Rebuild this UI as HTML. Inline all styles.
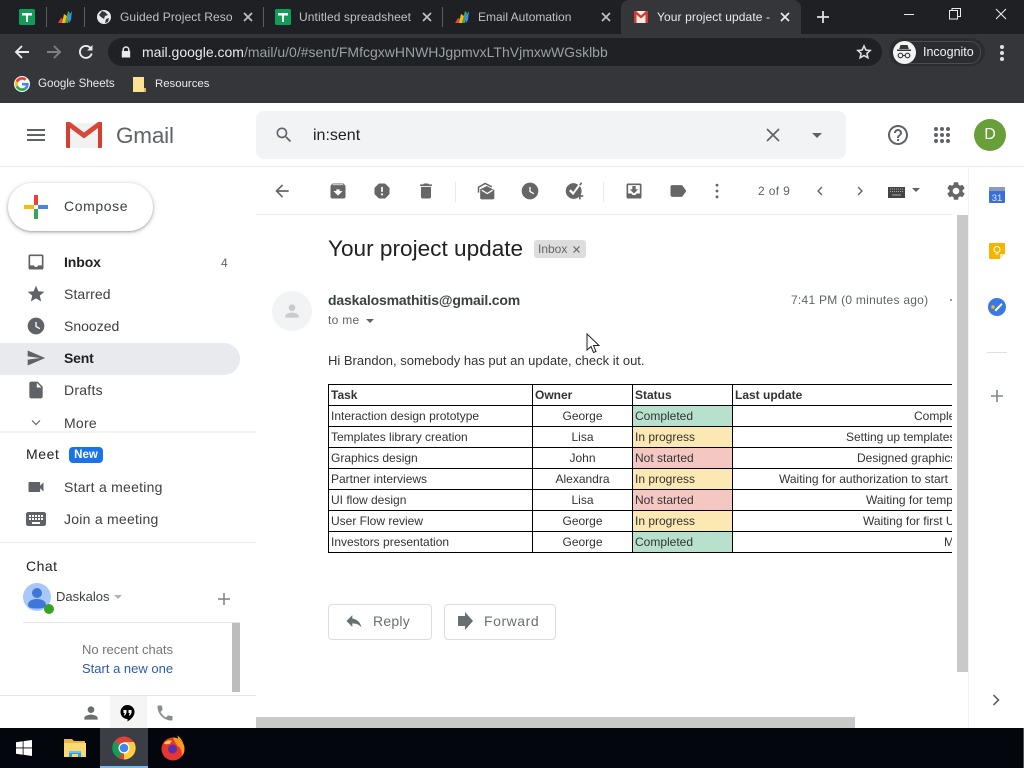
<!DOCTYPE html>
<html lang="en"><head><meta charset="utf-8"><title>Your project update</title>
<style>
html,body{margin:0;padding:0;width:1024px;height:768px;overflow:hidden;background:#fff;font-family:"Liberation Sans",sans-serif}
#r{position:relative;width:1024px;height:768px;overflow:hidden}
#r div,#r span.a,#r svg{position:absolute}
.t{white-space:nowrap;line-height:16px;height:16px}
.nav{left:64px;font-size:14px;color:#3c4043;letter-spacing:.25px}
.tab{top:9px;font-size:12px;color:#bdc1c6;overflow:hidden;letter-spacing:.1px}
.sep{top:7px;width:1px;height:20px;background:#5b5e63}
table{border-collapse:collapse;table-layout:fixed;width:804px;font-size:12px;color:#333}
td{border:1px solid #000;height:20px;padding:0 0 0 2px;white-space:nowrap;overflow:hidden;line-height:14px}
td.o{text-align:center;padding:0}
td.g{background:#b7e1cd}td.y{background:#fce8b2}td.n{background:#f4c7c3}
</style></head><body><div id="r">

<!-- tab strip -->
<div style="left:0;top:0;width:1024px;height:34px;background:#1f2023"></div>
<div style="left:0;top:34px;width:1024px;height:69px;background:#35363a"></div>
<div style="left:621px;top:0;width:180px;height:34px;background:#35363a;border-radius:8px 8px 0 0"></div>

<svg style="left:19px;top:9px" width="16" height="16" viewBox="0 0 16 16"><rect width="16" height="16" rx="1.5" fill="#0f9d58"/><path d="M3 4h10v2.500H9V13H7V6.500H3z" fill="#fff"/></svg>
<div class="sep" style="left:46px"></div>
<svg style="left:57px;top:9px" width="16" height="16" viewBox="0 0 16 16"><path d="M1 14l3-5 2 1-1 4z" fill="#ea4335"/><path d="M5 14l2-9 3 2-2 7z" fill="#fbbc04"/><path d="M8 14l3-12 2 2-2 10z" fill="#34a853"/><path d="M11 8l4-6-1 9-2 3z" fill="#4285f4"/></svg>
<div class="sep" style="left:84px"></div>
<svg style="left:96px;top:9px" width="16" height="16" viewBox="0 0 16 16"><circle cx="8" cy="8" r="7" fill="#e8eaed"/><path d="M6 2l3 1 3 3-3 1-1 3-3-2-2-2zM10 10l3-1-1 4-3 1z" fill="#35363a"/></svg>
<div class="t tab" style="left:120px;width:113px">Guided Project Resou</div>
<svg style="left:243px;top:12px" width="10" height="10" viewBox="0 0 10 10"><path d="M1 1l8 8M9 1l-8 8" stroke="#bdc1c6" stroke-width="1.7"/></svg>
<div class="sep" style="left:263px"></div>
<svg style="left:275px;top:9px" width="16" height="16" viewBox="0 0 16 16"><rect width="16" height="16" rx="1.500" fill="#0f9d58"/><path d="M3 4h10v2.500H9V13H7V6.500H3z" fill="#fff"/></svg>
<div class="t tab" style="left:299px;width:112px">Untitled spreadsheet</div>
<svg style="left:422px;top:12px" width="10" height="10" viewBox="0 0 10 10"><path d="M1 1l8 8M9 1l-8 8" stroke="#bdc1c6" stroke-width="1.700"/></svg>
<div class="sep" style="left:442px"></div>
<svg style="left:454px;top:9px" width="16" height="16" viewBox="0 0 16 16"><path d="M1 14l3-5 2 1-1 4z" fill="#ea4335"/><path d="M5 14l2-9 3 2-2 7z" fill="#fbbc04"/><path d="M8 14l3-12 2 2-2 10z" fill="#34a853"/><path d="M11 8l4-6-1 9-2 3z" fill="#4285f4"/></svg>
<div class="t tab" style="left:478px;width:100px;letter-spacing:0">Email Automation</div>
<svg style="left:601px;top:12px" width="10" height="10" viewBox="0 0 10 10"><path d="M1 1l8 8M9 1l-8 8" stroke="#bdc1c6" stroke-width="1.700"/></svg>
<svg style="left:634px;top:11px" width="14" height="12" viewBox="0 0 14 12"><rect width="14" height="12" fill="#f1e9e8"/><path d="M0 0h2.500v12H0zM11.500 0H14v12h-2.500z" fill="#d33b2e"/><path d="M0 0h2l5 4.500L12 0h2v1.500L7 7.500 0 1.500z" fill="#d33b2e"/></svg>
<div class="t tab" style="left:657px;width:114px;color:#e8eaed">Your project update -</div>
<svg style="left:780px;top:12px" width="10" height="10" viewBox="0 0 10 10"><path d="M1 1l8 8M9 1l-8 8" stroke="#e8eaed" stroke-width="1.700"/></svg>
<svg style="left:816px;top:10px" width="14" height="14" viewBox="0 0 14 14"><path d="M7 1v12M1 7h12" stroke="#dee1e6" stroke-width="1.800"/></svg>
<div style="left:904px;top:14px;width:10px;height:1px;background:#e8eaed"></div>
<svg style="left:949px;top:8px" width="12" height="12" viewBox="0 0 12 12" fill="none" stroke="#e8eaed"><rect x=".5" y="2.500" width="8" height="8.500"/><path d="M3 2.500V.5h8.500V8.500H8.500"/></svg>
<svg style="left:995px;top:8px" width="12" height="12" viewBox="0 0 12 12"><path d="M1 1l10 10M11 1L1 11" stroke="#e8eaed" stroke-width="1.100"/></svg>

<!-- toolbar -->
<svg style="left:14px;top:44px" width="16" height="16" viewBox="0 0 16 16" fill="none" stroke="#e8eaed" stroke-width="1.900"><path d="M15 8H2M8 2L2 8l6 6"/></svg>
<svg style="left:46px;top:44px" width="16" height="16" viewBox="0 0 16 16" fill="none" stroke="#7e8185" stroke-width="1.900"><path d="M1 8h13M8 2l6 6-6 6"/></svg>
<svg style="left:78px;top:44px" width="16" height="16" viewBox="0 0 16 16" fill="none" stroke="#e8eaed" stroke-width="1.900"><path d="M13.700 9.500A6 6 0 1 1 12.300 3.800"/><path d="M14.500 1v5.500H9" fill="#e8eaed" stroke="none"/></svg>
<div style="left:108px;top:38px;width:774px;height:28px;border-radius:14px;background:#202124"></div>
<svg style="left:120px;top:46px" width="12" height="12" viewBox="0 0 12 12"><path d="M2.500 5V3.700a3.500 3.500 0 0 1 7 0V5h.7v6.500H1.800V5zM4 5h4V3.700a2 2 0 0 0-4 0z" fill="#e8eaed" fill-rule="evenodd"/></svg>
<div class="t" style="left:142px;top:44px;font-size:14px;color:#e8eaed">mail.google.com<span style="color:#9aa0a6">/mail/u/0/#sent/FMfcgxwHNWHJgpmvxLThVjmxwWGsklbb</span></div>
<svg style="left:856px;top:44px" width="16" height="16" viewBox="0 0 24 24" fill="none" stroke="#dadce0" stroke-width="2.400"><path d="M12 3l2.800 6 6.500.7-4.900 4.400 1.400 6.400L12 17.300l-5.800 3.200 1.400-6.400-4.900-4.400 6.500-.7z"/></svg>
<div style="left:889px;top:38px;width:96px;height:28px;border-radius:14px;background:#2b2c2f"></div>
<div style="left:893px;top:41px;width:86px;height:21px;border-radius:11px;border:1px solid #4a4c50"></div>
<div style="left:893px;top:41px;width:23px;height:23px;border-radius:50%;background:#f1f3f4"></div>
<svg style="left:895px;top:44px" width="18" height="17" viewBox="0 0 18 17" fill="#35363a"><path d="M5.500 1h7l1.300 4h-9.600zM2 5.500h14V7H2z"/><circle cx="5.500" cy="11.500" r="2.300" fill="none" stroke="#35363a" stroke-width="1.200"/><circle cx="12.500" cy="11.500" r="2.300" fill="none" stroke="#35363a" stroke-width="1.200"/><path d="M7.500 11h3v1h-3z"/></svg>
<div class="t" style="left:923px;top:44px;font-size:12.500px;color:#f1f3f4">Incognito</div>
<div style="left:1000px;top:45px;width:4px;height:4px;border-radius:50%;background:#dee1e6"></div>
<div style="left:1000px;top:51px;width:4px;height:4px;border-radius:50%;background:#dee1e6"></div>
<div style="left:1000px;top:57px;width:4px;height:4px;border-radius:50%;background:#dee1e6"></div>

<!-- bookmarks -->
<div style="left:14px;top:76px;width:16px;height:16px;border-radius:50%;background:#fff"></div>
<svg style="left:15px;top:77px" width="14" height="14" viewBox="0 0 48 48"><path fill="#EA4335" d="M24 9.500c3.500 0 6.700 1.300 9.100 3.400l6.800-6.800C35.800 2.400 30.200 0 24 0 14.600 0 6.500 5.400 2.600 13.200l7.900 6.200C12.400 13.700 17.700 9.500 24 9.500z"/><path fill="#4285F4" d="M47 24.500c0-1.600-.1-3.100-.4-4.500H24v9h12.900c-.6 3-2.200 5.500-4.700 7.200l7.700 6c4.500-4.200 7.100-10.300 7.100-17.700z"/><path fill="#FBBC05" d="M10.500 28.600c-.5-1.400-.8-3-.8-4.600s.3-3.200.8-4.600l-7.900-6.200C.9 16.500 0 20.100 0 24s.9 7.500 2.600 10.800z"/><path fill="#34A853" d="M24 48c6.500 0 11.900-2.100 15.900-5.800l-7.700-6c-2.100 1.400-4.900 2.300-8.200 2.300-6.300 0-11.600-4.200-13.500-9.900l-7.900 6.200C6.500 42.600 14.600 48 24 48z"/></svg>
<div class="t" style="left:38px;top:76px;font-size:11.600px;color:#e8eaed">Google Sheets</div>
<svg style="left:133px;top:77px" width="13" height="15" viewBox="0 0 13 15"><path d="M0 0h11v11l2 0v4H0z" fill="#fde293"/><path d="M11 11h2v4h-2z" fill="#d9b85a"/></svg>
<div class="t" style="left:155px;top:76px;font-size:11.400px;color:#e8eaed">Resources</div>

<!-- gmail header -->
<div style="left:0;top:166px;width:1024px;height:1px;background:#e8eaed"></div>
<svg style="left:24px;top:123px" width="24" height="24" viewBox="0 0 24 24" fill="#5f6368"><path d="M3 18h18v-2H3v2zm0-5h18v-2H3v2zm0-7v2h18V6H3z"/></svg>
<svg style="left:66px;top:122px" width="36" height="26" viewBox="0 0 36 26"><path d="M0 1h36v25H0z" fill="#f2f2f2"/><path d="M4 0L18 10.500 32 0h4v3L18 16.500 0 3V0z" fill="#d8473a"/><path d="M0 1l4 3v22H1.500A1.500 1.500 0 0 1 0 24.500zM36 1l-4 3v22h2.500a1.500 1.500 0 0 0 1.500-1.500z" fill="#d23f31"/></svg>
<div class="t" style="left:116px;top:121px;font-size:22.500px;line-height:30px;height:30px;color:#5f6368;letter-spacing:-.2px">Gmail</div>
<div style="left:256px;top:111px;width:590px;height:48px;background:#f1f3f4;border-radius:8px"></div>
<svg style="left:274px;top:125px" width="20" height="20" viewBox="0 0 24 24" fill="#5f6368"><path d="M15.500 14h-.79l-.28-.27C15.410 12.590 16 11.110 16 9.500 16 5.910 13.090 3 9.500 3S3 5.910 3 9.500 5.910 16 9.500 16c1.610 0 3.090-.59 4.230-1.570l.27.28v.79l5 4.990L20.490 19l-4.990-5zm-6 0C7.010 14 5 11.990 5 9.500S7.010 5 9.500 5 14 7.010 14 9.500 11.990 14 9.500 14z"/></svg>
<div class="t" style="left:313px;top:128px;font-size:16px;color:#202124">in:sent</div>
<svg style="left:766px;top:128px" width="14" height="14" viewBox="0 0 14 14"><path d="M1 1l12 12M13 1L1 13" stroke="#5f6368" stroke-width="1.700"/></svg>
<div style="left:812px;top:133px;width:0;height:0;border-left:5px solid transparent;border-right:5px solid transparent;border-top:5px solid #5f6368"></div>
<svg style="left:886px;top:123px" width="24" height="24" viewBox="0 0 24 24" fill="#5f6368"><path d="M11 18h2v-2h-2v2zm1-16C6.480 2 2 6.480 2 12s4.480 10 10 10 10-4.480 10-10S17.520 2 12 2zm0 18c-4.410 0-8-3.590-8-8s3.590-8 8-8 8 3.590 8 8-3.590 8-8 8zm0-14c-2.210 0-4 1.790-4 4h2c0-1.100.9-2 2-2s2 .9 2 2c0 2-3 1.750-3 5h2c0-2.250 3-2.500 3-5 0-2.210-1.790-4-4-4z"/></svg>
<svg style="left:930px;top:123px" width="24" height="24" viewBox="0 0 24 24" fill="#5f6368"><circle cx="6" cy="6" r="2"/><circle cx="12" cy="6" r="2"/><circle cx="18" cy="6" r="2"/><circle cx="6" cy="12" r="2"/><circle cx="12" cy="12" r="2"/><circle cx="18" cy="12" r="2"/><circle cx="6" cy="18" r="2"/><circle cx="12" cy="18" r="2"/><circle cx="18" cy="18" r="2"/></svg>
<div style="left:974px;top:119px;width:32px;height:32px;border-radius:50%;background:#689f38;color:#fff;font-size:16px;line-height:32px;text-align:center">D</div>

<!-- left nav -->
<div style="left:8px;top:183px;width:145px;height:48px;border-radius:24px;background:#fff;box-shadow:0 1px 2px rgba(60,64,67,.35),0 1px 4px 1px rgba(60,64,67,.18)"></div>
<svg style="left:24px;top:195px" width="24" height="24" viewBox="0 0 24 24"><path d="M10 0h4v10h-4z" fill="#ea4335"/><path d="M0 10h10v4H0z" fill="#fbbc04"/><path d="M14 10h10v4H14z" fill="#4285f4"/><path d="M10 14h4v10h-4z" fill="#34a853"/></svg>
<div class="t" style="left:64px;top:198px;font-size:14px;color:#3c4043;letter-spacing:.6px">Compose</div>

<div style="left:0;top:343px;width:240px;height:32px;border-radius:0 16px 16px 0;background:#e8eaed"></div>
<svg style="left:26px;top:252px" width="20" height="20" viewBox="0 0 24 24" fill="#5f6368"><path fill-rule="evenodd" d="M19 3H5a2 2 0 0 0-2 2v14a2 2 0 0 0 2 2h14a2 2 0 0 0 2-2V5a2 2 0 0 0-2-2zM5 5h14v11h-4.500c-.5 1.300-1.300 2-2.500 2s-2-.7-2.500-2H5z"/></svg>
<svg style="left:26px;top:284px" width="20" height="20" viewBox="0 0 24 24" fill="#5f6368"><path d="M12 17.270L18.180 21l-1.640-7.030L22 9.240l-7.190-.61L12 2 9.190 8.630 2 9.240l5.460 4.730L5.820 21z"/></svg>
<svg style="left:26px;top:316px" width="20" height="20" viewBox="0 0 24 24" fill="#5f6368"><path fill-rule="evenodd" d="M12 2a10 10 0 1 0 0 20 10 10 0 0 0 0-20zm.8 5h-1.600v6l5 2.900.8-1.300-4.200-2.500z"/></svg>
<svg style="left:26px;top:348px" width="20" height="20" viewBox="0 0 24 24" fill="#5f6368"><path d="M2.010 21L23 12 2.010 3 2 10l15 2-15 2z"/></svg>
<svg style="left:26px;top:380px" width="20" height="20" viewBox="0 0 24 24" fill="#5f6368"><path d="M6 2c-1.100 0-2 .9-2 2v16c0 1.100.9 2 2 2h12c1.100 0 2-.9 2-2V8l-6-6H6zm7 7V3.500L18.500 9H13z"/></svg>
<svg style="left:31px;top:419px" width="10" height="8" viewBox="0 0 10 8" fill="none" stroke="#5f6368" stroke-width="1.200"><path d="M1 1.500l4 4 4-4"/></svg>
<div class="t nav" style="top:254px;font-weight:bold;color:#202124;letter-spacing:-.1px">Inbox</div>
<div class="t" style="left:221px;top:255px;font-size:12px;color:#5f6368">4</div>
<div class="t nav" style="top:286px;letter-spacing:.1px">Starred</div>
<div class="t nav" style="top:318px;letter-spacing:0">Snoozed</div>
<div class="t nav" style="top:350px;font-weight:bold;color:#202124;letter-spacing:-.2px">Sent</div>
<div class="t nav" style="top:382px">Drafts</div>
<div class="t nav" style="top:415px">More</div>
<div style="left:0;top:431px;width:256px;height:2px;background:#f1f3f4"></div>

<div class="t" style="left:26px;top:446px;font-size:14px;color:#202124;letter-spacing:.6px">Meet</div>
<div style="left:69px;top:447px;width:34px;height:16px;border-radius:4px;background:#1a73e8;color:#fff;font-size:11.500px;font-weight:bold;line-height:16px;text-align:center">New</div>
<svg style="left:26px;top:477px" width="20" height="20" viewBox="0 0 24 24" fill="#5f6368"><path d="M17 10.500V7c0-.55-.45-1-1-1H4c-.55 0-1 .45-1 1v10c0 .55.45 1 1 1h12c.55 0 1-.45 1-1v-3.500l4 4v-11l-4 4z"/></svg>
<svg style="left:24px;top:507px" width="24" height="24" viewBox="0 0 24 24" fill="#5f6368"><path d="M20 5H4c-1.100 0-1.990.9-1.990 2L2 17c0 1.100.9 2 2 2h16c1.100 0 2-.9 2-2V7c0-1.100-.9-2-2-2zm-9 3h2v2h-2V8zm0 3h2v2h-2v-2zM8 8h2v2H8V8zm0 3h2v2H8v-2zm-1 2H5v-2h2v2zm0-3H5V8h2v2zm9 7H8v-2h8v2zm0-4h-2v-2h2v2zm0-3h-2V8h2v2zm3 3h-2v-2h2v2zm0-3h-2V8h2v2z"/></svg>
<div class="t nav" style="top:479px">Start a meeting</div>
<div class="t nav" style="top:511px">Join a meeting</div>
<div style="left:0;top:542px;width:256px;height:1px;background:#e8eaed"></div>

<div class="t" style="left:26px;top:558px;font-size:14px;color:#202124;letter-spacing:.5px">Chat</div>
<div style="left:23px;top:583px;width:28px;height:28px;border-radius:50%;background:#a8c7fa"></div>
<svg style="left:27px;top:586px" width="20" height="24" viewBox="0 0 20 24" fill="#3f76d9"><circle cx="10" cy="7" r="5"/><path d="M1 19c0-4 4-6 9-6s9 2 9 6c0 3-4 3.500-9 3.500S1 22 1 19z"/></svg>
<div style="left:44px;top:604px;width:10px;height:10px;border-radius:50%;background:#36a420"></div>
<div class="t" style="left:56px;top:589px;font-size:13px;color:#3c4043">Daskalos</div>
<div style="left:114px;top:595px;width:0;height:0;border-left:4px solid transparent;border-right:4px solid transparent;border-top:4px solid #b0b3b6"></div>
<svg style="left:218px;top:593px" width="12" height="12" viewBox="0 0 12 12"><path d="M6 0v12M0 6h12" stroke="#7d8083" stroke-width="1.500"/></svg>
<div style="left:23px;top:622px;width:217px;height:1px;background:#e5e5e5"></div>
<div style="left:232px;top:623px;width:8px;height:69px;background:#bdbdbd"></div>
<div class="t" style="left:82px;top:642px;font-size:13px;color:#777">No recent chats</div>
<div class="t" style="left:82px;top:661px;font-size:13px;color:#2a5db0">Start a new one</div>
<div style="left:0;top:695px;width:256px;height:1px;background:#e5e5e5"></div>
<div style="left:110px;top:696px;width:37px;height:32px;background:#f5f5f5"></div>
<svg style="left:81px;top:703px" width="20" height="20" viewBox="0 0 24 24" fill="#6b6e71"><path d="M12 12c2.210 0 4-1.790 4-4s-1.790-4-4-4-4 1.790-4 4 1.790 4 4 4zm0 2c-2.670 0-8 1.340-8 4v2h16v-2c0-2.660-5.330-4-8-4z"/></svg>
<svg style="left:120px;top:705px" width="15" height="17" viewBox="0 0 15 17"><path d="M7.500 0a7 7 0 0 1 7 7c0 4-3.500 7.500-7 9.500V14a7 7 0 0 1 0-14z" fill="#000"/><path d="M3.500 5h3v3l-1.500 2.500H3.800L4.800 8H3.500zM8.500 5h3v3L10 10.500H8.800L9.800 8H8.500z" fill="#fff"/></svg>
<svg style="left:155px;top:703px" width="20" height="20" viewBox="0 0 24 24" fill="#8a8d90"><path d="M6.620 10.790c1.440 2.830 3.760 5.140 6.590 6.590l2.200-2.200c.27-.27.670-.36 1.020-.24 1.120.37 2.330.57 3.570.57.55 0 1 .45 1 1V20c0 .55-.45 1-1 1-9.390 0-17-7.610-17-17 0-.55.45-1 1-1h3.500c.55 0 1 .45 1 1 0 1.250.2 2.450.57 3.570.11.350.03.740-.25 1.020l-2.200 2.200z"/></svg>

<!-- message toolbar -->
<div style="left:256px;top:214px;width:696px;height:1px;background:#e8eaed"></div>
<svg style="left:272px;top:181px" width="20" height="20" viewBox="0 0 24 24" fill="#666"><path d="M20 11H7.830l5.590-5.590L12 4l-8 8 8 8 1.410-1.410L7.830 13H20v-2z"/></svg>
<svg style="left:328px;top:181px" width="20" height="20" viewBox="0 0 24 24" fill="#666"><path d="M20.540 5.230l-1.390-1.680C18.880 3.210 18.470 3 18 3H6c-.47 0-.88.21-1.160.55L3.460 5.230C3.170 5.570 3 6.020 3 6.500V19c0 1.100.9 2 2 2h14c1.100 0 2-.9 2-2V6.500c0-.48-.17-.93-.46-1.270zM12 17.500L6.500 12H10v-2h4v2h3.500L12 17.500zM5.120 5l.81-1h12l.94 1H5.120z"/></svg>
<svg style="left:372px;top:181px" width="20" height="20" viewBox="0 0 24 24" fill="#666"><path d="M15.730 3H8.270L3 8.270v7.460L8.270 21h7.460L21 15.730V8.270L15.730 3zM12 17.300c-.72 0-1.300-.58-1.300-1.300 0-.72.58-1.300 1.300-1.300.72 0 1.300.58 1.300 1.300 0 .72-.58 1.300-1.300 1.300zm1-4.300h-2V7h2v6z"/></svg>
<svg style="left:416px;top:181px" width="20" height="20" viewBox="0 0 24 24" fill="#666"><path d="M6 19c0 1.100.9 2 2 2h8c1.100 0 2-.9 2-2V7H6v12zM19 4h-3.500l-1-1h-5l-1 1H5v2h14V4z"/></svg>
<div style="left:455px;top:182px;width:1px;height:20px;background:#e8eaed"></div>
<svg style="left:476px;top:181px" width="20" height="20" viewBox="0 0 24 24"><path fill="none" stroke="#666" stroke-width="1.800" d="M3 14V7.500L11 3l8 4"/><path fill="#666" d="M5 10l8-4 9 5v9a2 2 0 0 1-2 2H7a2 2 0 0 1-2-2z"/><path fill="none" stroke="#fff" stroke-width="1.500" d="M7 11l6.500 4 6.500-4"/></svg>
<svg style="left:520px;top:181px" width="20" height="20" viewBox="0 0 24 24" fill="#666"><path fill-rule="evenodd" d="M12 2a10 10 0 1 0 0 20 10 10 0 0 0 0-20zm.8 5h-1.600v6l5 2.900.8-1.300-4.200-2.500z"/></svg>
<svg style="left:564px;top:181px" width="20" height="20" viewBox="0 0 24 24"><path fill="#666" d="M11 2.500a9.500 9.500 0 0 1 6 2.100L11 13 8 10l-2 2 5 5 8-11a9.500 9.500 0 1 1-8-3.500z"/><path stroke="#666" stroke-width="2" fill="none" d="M19 14v8M15 18h8M21 2l-2 3"/></svg>
<div style="left:603px;top:182px;width:1px;height:20px;background:#e8eaed"></div>
<svg style="left:624px;top:181px" width="20" height="20" viewBox="0 0 24 24" fill="#666"><path fill-rule="evenodd" d="M5 3h14a2 2 0 0 1 2 2v14a2 2 0 0 1-2 2H5a2 2 0 0 1-2-2V5a2 2 0 0 1 2-2zm0 2v10h4c.5 1.300 1.500 2 3 2s2.500-.7 3-2h4V5zm5 1h4v4h3l-5 5-5-5h3z"/></svg>
<svg style="left:668px;top:181px" width="20" height="20" viewBox="0 0 24 24" fill="#666"><path d="M17.630 5.840C17.270 5.330 16.670 5 16 5L5 5.010C3.900 5.010 3 5.900 3 7v10c0 1.100.9 1.990 2 1.990L16 19c.67 0 1.270-.33 1.630-.84L22 12l-4.370-6.160z"/></svg>
<svg style="left:707px;top:181px" width="20" height="20" viewBox="0 0 24 24" fill="#666"><circle cx="12" cy="5" r="1.700"/><circle cx="12" cy="12" r="1.700"/><circle cx="12" cy="19" r="1.700"/></svg>
<div class="t" style="left:758px;top:183px;font-size:12px;color:#5f6368;letter-spacing:.35px">2 of 9</div>
<svg style="left:815px;top:185px" width="10" height="12" viewBox="0 0 10 12" fill="none" stroke="#666" stroke-width="1.400"><path d="M7 2L3 6l4 4"/></svg>
<svg style="left:855px;top:185px" width="10" height="12" viewBox="0 0 10 12" fill="none" stroke="#666" stroke-width="1.400"><path d="M3 2l4 4-4 4"/></svg>
<svg style="left:888px;top:187px" width="17" height="11" viewBox="0 0 17 11"><rect width="17" height="11" fill="#444"/><path d="M2 2h13M2 4.500h13" stroke="#aaa" stroke-dasharray="1 1"/><path d="M4 8h9" stroke="#aaa"/></svg>
<div style="left:912px;top:188px;width:0;height:0;border-left:4.500px solid transparent;border-right:4.500px solid transparent;border-top:4.500px solid #5f6368"></div>
<svg style="left:945px;top:180px" width="22" height="22" viewBox="0 0 24 24" fill="#666"><path d="M19.140 12.940c.04-.3.06-.61.06-.94 0-.32-.02-.64-.07-.94l2.030-1.580c.18-.14.23-.41.12-.61l-1.920-3.320c-.12-.22-.37-.29-.59-.22l-2.390.96c-.5-.38-1.030-.7-1.620-.94l-.36-2.540c-.04-.24-.24-.41-.48-.41h-3.840c-.24 0-.43.17-.47.41l-.36 2.540c-.59.24-1.130.57-1.620.94l-2.390-.96c-.22-.08-.47 0-.59.22L2.740 8.870c-.12.21-.08.47.12.61l2.030 1.580c-.05.3-.09.63-.09.94s.02.64.07.94l-2.030 1.580c-.18.14-.23.41-.12.61l1.920 3.320c.12.22.37.29.59.22l2.390-.96c.5.38 1.030.7 1.620.94l.36 2.540c.05.24.24.41.48.41h3.840c.24 0 .44-.17.47-.41l.36-2.540c.59-.24 1.130-.56 1.620-.94l2.390.96c.22.08.47 0 .59-.22l1.920-3.320c.12-.22.07-.47-.12-.61l-2.010-1.580zM12 15.600c-1.980 0-3.600-1.620-3.600-3.600s1.620-3.600 3.600-3.600 3.600 1.620 3.600 3.600-1.620 3.600-3.600 3.600z"/></svg>

<!-- message -->
<div class="t" style="left:328px;top:235px;height:28px;line-height:28px;font-size:22.600px;color:#202124">Your project update</div>
<div style="left:534px;top:240px;width:52px;height:18px;background:#ddd;border-radius:3px"></div>
<div class="t" style="left:538px;top:241px;font-size:12px;color:#666">Inbox</div>
<svg style="left:573px;top:246px" width="7" height="7" viewBox="0 0 7 7"><path d="M.5.5l6 6M6.500.5l-6 6" stroke="#666" stroke-width="1.200"/></svg>
<div style="left:272px;top:291px;width:40px;height:40px;border-radius:50%;background:#f1f3f4"></div>
<svg style="left:282px;top:301px" width="20" height="20" viewBox="0 0 24 24" fill="#c8cacc"><path d="M12 12c2.210 0 4-1.790 4-4s-1.790-4-4-4-4 1.790-4 4 1.790 4 4 4zm0 2c-2.670 0-8 1.340-8 4v2h16v-2c0-2.660-5.330-4-8-4z"/></svg>
<div class="t" style="left:328px;top:292px;font-size:14px;font-weight:bold;color:#3c4043;letter-spacing:-.17px">daskalosmathitis@gmail.com</div>
<div class="t" style="left:328px;top:312px;font-size:12px;color:#5f6368;letter-spacing:.3px">to me</div>
<div style="left:366px;top:319px;width:0;height:0;border-left:4px solid transparent;border-right:4px solid transparent;border-top:4px solid #5f6368"></div>
<div class="t" style="left:791px;top:292px;font-size:12px;color:#5f6368;letter-spacing:.26px">7:41 PM (0 minutes ago)</div>
<div style="left:950px;top:299px;width:2px;height:2px;background:#999"></div>
<div class="t" style="left:328px;top:353px;font-size:13px;color:#333">Hi Brandon, somebody has put an update, check it out.</div>

<div style="left:328px;top:384px;width:624px;height:170px;overflow:hidden">
<table>
<colgroup><col style="width:204px"><col style="width:100px"><col style="width:100px"><col style="width:400px"></colgroup>
<tr style="font-weight:bold"><td>Task</td><td style="padding-left:2px">Owner</td><td>Status</td><td>Last update</td></tr>
<tr><td>Interaction design prototype</td><td class="o">George</td><td class="g">Completed</td><td style="padding-left:181px">Completed</td></tr>
<tr><td>Templates library creation</td><td class="o">Lisa</td><td class="y">In progress</td><td style="padding-left:113px">Setting up templates</td></tr>
<tr><td>Graphics design</td><td class="o">John</td><td class="n">Not started</td><td style="padding-left:124px">Designed graphics</td></tr>
<tr><td>Partner interviews</td><td class="o">Alexandra</td><td class="y">In progress</td><td style="padding-left:46px">Waiting for authorization to start</td></tr>
<tr><td>UI flow design</td><td class="o">Lisa</td><td class="n">Not started</td><td style="padding-left:133px">Waiting for templates</td></tr>
<tr><td>User Flow review</td><td class="o">George</td><td class="y">In progress</td><td style="padding-left:130px">Waiting for first UI</td></tr>
<tr><td>Investors presentation</td><td class="o">George</td><td class="g">Completed</td><td style="padding-left:211px">Mockups</td></tr>
</table>
</div>

<div style="left:328px;top:604px;width:102px;height:34px;border:1px solid #dadce0;border-radius:4px"></div>
<svg style="left:344px;top:611px" width="20" height="20" viewBox="0 0 24 24" fill="#6b6e71"><path d="M10 9V5l-7 7 7 7v-4.100c5 0 8.500 1.600 11 5.100-1-5-4-10-11-11z"/></svg>
<div class="t" style="left:373px;top:613px;font-size:14px;color:#6b6e71;letter-spacing:.25px">Reply</div>
<div style="left:444px;top:604px;width:110px;height:34px;border:1px solid #dadce0;border-radius:4px"></div>
<svg style="left:458px;top:612px" width="15" height="18" viewBox="0 0 15 18" fill="#6b6e71"><path d="M0 4h7V0l8 9-8 9v-4H0z"/></svg>
<div class="t" style="left:484px;top:613px;font-size:14px;color:#6b6e71;letter-spacing:.55px">Forward</div>

<!-- scrollbars -->
<div style="left:957px;top:215px;width:11px;height:457px;background:#c9c9c9"></div>
<div style="left:256px;top:717px;width:599px;height:11px;background:#c9c9c9"></div>

<!-- right rail -->
<div style="left:968px;top:167px;width:1px;height:561px;background:#f1f3f4"></div>
<svg style="left:989px;top:187px" width="16" height="16" viewBox="0 0 16 16"><rect width="16" height="16" rx="1" fill="#3a6fd8"/><rect width="16" height="4" fill="#8c9bb8"/><text x="8" y="14" font-family="Liberation Sans,sans-serif" font-size="9.500" fill="#dce6fa" text-anchor="middle">31</text></svg>
<svg style="left:989px;top:243px" width="16" height="16" viewBox="0 0 16 16"><path d="M1 0h14a1 1 0 0 1 1 1v10l-5 5H1a1 1 0 0 1-1-1V1a1 1 0 0 1 1-1z" fill="#f4b400"/><path d="M16 11h-5v5z" fill="#fbe7a8"/><circle cx="8" cy="6.500" r="3" fill="none" stroke="#fff"/><path d="M6.500 11h3" stroke="#fff"/></svg>
<svg style="left:988px;top:298px" width="18" height="18" viewBox="0 0 18 18"><circle cx="9" cy="9" r="9" fill="#3b78e7"/><path d="M6.500 12l7-7 1 1.500-6.500 7z" fill="#fff"/><circle cx="5" cy="9" r="1.800" fill="#fbbc04"/></svg>
<div style="left:987px;top:352px;width:20px;height:1px;background:#e0e0e0"></div>
<svg style="left:990px;top:389px" width="14" height="14" viewBox="0 0 14 14"><path d="M7 1v12M1 7h12" stroke="#80868b" stroke-width="1.600"/></svg>
<svg style="left:991px;top:694px" width="10" height="12" viewBox="0 0 10 12" fill="none" stroke="#5f6368" stroke-width="1.600"><path d="M2.500 1l5 5-5 5"/></svg>

<!-- cursor -->
<svg style="left:586px;top:333px" width="14" height="21" viewBox="0 0 14 21"><path d="M1 1v16l4-3.500 2.500 6 2.500-1-2.500-6H13z" fill="#fff" stroke="#222" stroke-width="1"/></svg>

<!-- taskbar -->
<div style="left:0;top:728px;width:1024px;height:40px;background:#03060d"></div>
<div style="left:100px;top:728px;width:48px;height:40px;background:#3b3e44"></div>
<div style="left:100px;top:766px;width:48px;height:2px;background:#76b9ed"></div>
<div style="left:1023px;top:728px;width:1px;height:40px;background:#555"></div>
<svg style="left:16px;top:740px" width="16" height="16" viewBox="0 0 16 16" fill="#fff"><path d="M0 2.200l6.700-1v6.300H0zM7.500 1.100L16 0v7.500H7.500zM0 8.400h6.700v6.400L0 13.800zM7.500 8.400H16V16l-8.500-1.200z"/></svg>
<svg style="left:64px;top:738px" width="22" height="20" viewBox="0 0 22 20"><path d="M0 1h8l2 2h11v3H0z" fill="#e8b93f"/><path d="M0 5h22v14H0z" fill="#fcd873"/><path d="M5 13h12v6h-3v-3H8v3H5z" fill="#2f9fd8"/><path d="M5 13h12v2H5z" fill="#65c3ef"/></svg>
<svg style="left:112px;top:736px" width="24" height="24" viewBox="0 0 24 24"><circle cx="12" cy="12" r="11.500" fill="#db4437"/><path d="M12 12L2 18a11.500 11.500 0 0 1 .2-12.500z" fill="#0f9d58"/><path d="M12 6h10a11.500 11.500 0 0 1-10 17.500z" fill="#ffcd40"/><path d="M12 12L7 21.900A11.500 11.500 0 0 1 2 18z" fill="#0f9d58"/><circle cx="12" cy="12" r="5.500" fill="#fff"/><circle cx="12" cy="12" r="4.300" fill="#4285f4"/></svg>
<svg style="left:161px;top:735px" width="24" height="26" viewBox="0 0 24 26"><circle cx="12" cy="14" r="11.500" fill="#e8352e"/><path d="M23.500 14A11.500 11.500 0 0 0 17 3.500c0-1-.3-2-1-3 2 1 7 5 7.500 13.500z" fill="#ffb81c"/><path d="M12 2.500c6 0 11.500 5 11.500 11.500 0 3-1 5-3 7 1-3 0-8-4-10-1-2-3-4-4.500-8.500z" fill="#ff9a1f"/><circle cx="11.500" cy="14" r="4.500" fill="#5a2fb0"/><path d="M3 8c3-3 6-3 8-2-1 1-2 2-2 3-3 0-5 1-6-1z" fill="#ffcf3f"/></svg>

</div></body></html>
